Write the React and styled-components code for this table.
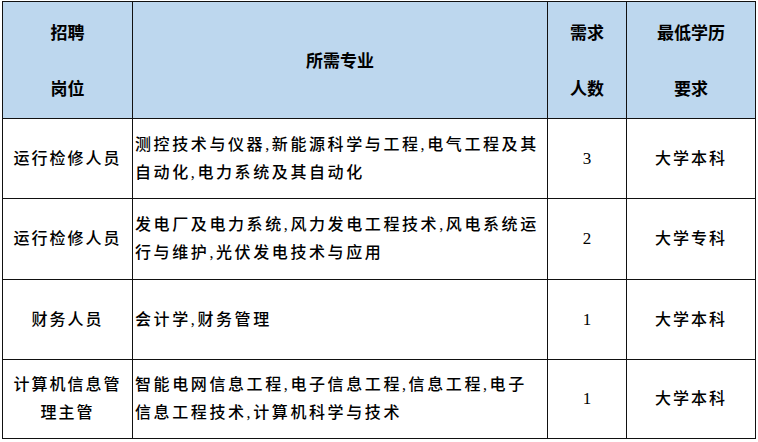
import React from "react";
import styled, { createGlobalStyle } from "styled-components";

const GlobalStyle = createGlobalStyle`
  body {
    margin: 0;
    background: #ffffff;
  }
`;

const rows = [
  {
    post: ["运行检修人员"],
    major: ["测控技术与仪器,新能源科学与工程,电气工程及其", "自动化,电力系统及其自动化"],
    count: "3",
    degree: "大学本科",
    height: 80,
  },
  {
    post: ["运行检修人员"],
    major: ["发电厂及电力系统,风力发电工程技术,风电系统运", "行与维护,光伏发电技术与应用"],
    count: "2",
    degree: "大学专科",
    height: 81,
  },
  {
    post: ["财务人员"],
    major: ["会计学,财务管理"],
    count: "1",
    degree: "大学本科",
    height: 80,
  },
  {
    post: ["计算机信息管", "理主管"],
    major: ["智能电网信息工程,电子信息工程,信息工程,电子", "信息工程技术,计算机科学与技术"],
    count: "1",
    degree: "大学本科",
    height: 79,
  },
];

export default function App() {
  return (
    <>
      <GlobalStyle />
      <Table>
        <colgroup>
          <col style={{ width: 130 }} />
          <col style={{ width: 415 }} />
          <col style={{ width: 79 }} />
          <col style={{ width: 129 }} />
        </colgroup>
        <thead>
          <Row height={117}>
            <HeadCell>
              招聘
              <br />
              岗位
            </HeadCell>
            <HeadCell>所需专业</HeadCell>
            <HeadCell>
              需求
              <br />
              人数
            </HeadCell>
            <HeadCell>
              最低学历
              <br />
              要求
            </HeadCell>
          </Row>
        </thead>
        <tbody>
          {rows.map((r, i) => (
            <Row key={i} height={r.height}>
              <Cell>
                {r.post.map((line, j) => (
                  <Line key={j}>{line}</Line>
                ))}
              </Cell>
              <Cell align="left">
                {r.major.map((line, j) => (
                  <Line key={j} wide>
                    {line}
                  </Line>
                ))}
              </Cell>
              <NumberCell>{r.count}</NumberCell>
              <Cell>
                <Line>{r.degree}</Line>
              </Cell>
            </Row>
          ))}
        </tbody>
      </Table>
    </>
  );
}

const Table = styled.table`
  border-collapse: collapse;
  table-layout: fixed;
  width: 753px;
  margin: 1px 0 0 2px;
  color: #000000;
`;

const Row = styled.tr`
  height: ${(p) => p.height}px;
`;

const HeadCell = styled.th`
  background-color: #bdd7ee;
  border: 1px solid #111111;
  padding: 0;
  text-align: center;
  vertical-align: middle;
  font-family: "Noto Sans CJK SC", "Liberation Sans", sans-serif;
  font-size: 17px;
  font-weight: 700;
  line-height: 56px;
`;

const Cell = styled.td`
  border: 1px solid #111111;
  padding: 0 2px;
  text-align: ${(p) => p.align || "center"};
  vertical-align: middle;
  font-family: "Liberation Serif", "Noto Sans CJK SC", serif;
  font-size: 16px;
  font-weight: 500;
  line-height: 28px;
  white-space: nowrap;
  overflow: hidden;
`;

const Line = styled.div`
  letter-spacing: ${(p) => (p.wide ? "2.6px" : "2px")};
`;

const NumberCell = styled.td`
  border: 1px solid #111111;
  padding: 0;
  text-align: center;
  vertical-align: middle;
  font-family: "Liberation Serif", serif;
  font-size: 17px;
`;
